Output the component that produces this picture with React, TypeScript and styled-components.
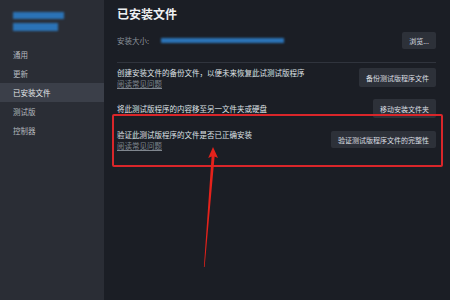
import React from "react";
import styled, { createGlobalStyle } from "styled-components";

const Global = createGlobalStyle`
  html, body { margin: 0; padding: 0; background: #1b1e25; }
  body { font-family: "Noto Sans CJK SC", "Noto Sans", sans-serif; }
  #root { width: 450px; height: 300px; overflow: hidden; }
`;

const Page = styled.div`
  position: relative;
  display: flex;
  width: 450px;
  height: 300px;
  background: #1b1e25;
  overflow: hidden;
`;

const Sidebar = styled.nav`
  width: 104px;
  flex: none;
  background: #2a2d35;
  display: flex;
  flex-direction: column;
  padding-top: 12px;
  box-sizing: border-box;
`;

const Logo = styled.div`
  display: flex;
  flex-direction: column;
  gap: 4px;
  padding-left: 13px;
  margin-bottom: 14px;
`;

const BlurBar = styled.div<{ $w: number; $h: number }>`
  width: ${(p) => p.$w}px;
  height: ${(p) => p.$h}px;
  background: #2b73b6;
  filter: blur(1px);
`;

const NavItem = styled.div<{ $active?: boolean }>`
  height: 19px;
  line-height: 19px;
  padding-left: 13px;
  font-size: 7.5px;
  color: ${(p) => (p.$active ? "#e6e8ea" : "#b5b9bf")};
  background: ${(p) => (p.$active ? "#3b3f49" : "transparent")};
`;

const Main = styled.main`
  flex: 1;
  padding: 6px 14px 0 13px;
  box-sizing: border-box;
  display: flex;
  flex-direction: column;
`;

const Title = styled.h1`
  margin: 0;
  font-size: 12px;
  line-height: 16px;
  font-weight: 700;
  color: #eef0f2;
`;

const SizeRow = styled.div`
  margin-top: 10px;
  height: 17px;
  display: flex;
  align-items: center;
  justify-content: space-between;
`;

const SizeLabel = styled.div`
  display: flex;
  align-items: center;
  gap: 12px;
  font-size: 7.5px;
  color: #8c939b;
`;

const Separator = styled.div`
  margin-top: 13px;
  height: 1px;
  background: #30343d;
`;

const Rows = styled.div`
  display: flex;
  flex-direction: column;
  gap: 10.5px;
  padding-top: 3.5px;
`;

const Row = styled.div`
  display: flex;
  align-items: center;
  justify-content: space-between;
  min-height: 19px;
`;

const TextBlock = styled.div`
  display: flex;
  flex-direction: column;
`;

const Desc = styled.div`
  font-size: 7.5px;
  line-height: 11px;
  color: #dfe2e5;
  white-space: nowrap;
`;

const Link = styled.div`
  font-size: 7.5px;
  line-height: 11px;
  color: #7f868e;
  text-decoration: underline;
  text-underline-offset: 1px;
`;

const Button = styled.div<{ $h?: number }>`
  height: ${(p) => p.$h ?? 19}px;
  padding: 0 7px;
  display: flex;
  align-items: center;
  background: #2d3139;
  border-radius: 2px;
  font-size: 7px;
  color: #dcdfe2;
  white-space: nowrap;
`;

const Highlight = styled.div`
  position: absolute;
  left: 112px;
  top: 114px;
  width: 331px;
  height: 53px;
  border: 2px solid #d9262a;
  border-radius: 2px;
  box-sizing: border-box;
  pointer-events: none;
`;

const Arrow = styled.svg`
  position: absolute;
  left: 0;
  top: 0;
  pointer-events: none;
`;

export default function App() {
  return (
    <>
      <Global />
      <Page>
        <Sidebar>
          <Logo>
            <BlurBar $w={51} $h={7} />
            <BlurBar $w={45} $h={8} />
          </Logo>
          <NavItem>通用</NavItem>
          <NavItem>更新</NavItem>
          <NavItem $active>已安装文件</NavItem>
          <NavItem>测试版</NavItem>
          <NavItem>控制器</NavItem>
        </Sidebar>
        <Main>
          <Title>已安装文件</Title>
          <SizeRow>
            <SizeLabel>
              安装大小:
              <BlurBar $w={123} $h={5} />
            </SizeLabel>
            <Button $h={17}>浏览...</Button>
          </SizeRow>
          <Separator />
          <Rows>
            <Row>
              <TextBlock>
                <Desc>创建安装文件的备份文件，以便未来恢复此试测试版程序</Desc>
                <Link>阅读常见问题</Link>
              </TextBlock>
              <Button>备份测试版程序文件</Button>
            </Row>
            <Row>
              <TextBlock>
                <Desc>将此测试版程序的内容移至另一文件夹或硬盘</Desc>
              </TextBlock>
              <Button>移动安装文件夹</Button>
            </Row>
            <Row>
              <TextBlock>
                <Desc>验证此测试版程序的文件是否已正确安装</Desc>
                <Link>阅读常见问题</Link>
              </TextBlock>
              <Button $h={17}>验证测试版程序文件的完整性</Button>
            </Row>
          </Rows>
        </Main>
        <Highlight />
        <Arrow width={450} height={300} viewBox="0 0 450 300">
          <polygon
            points="213,147 218,158 214.6,156.5 204.6,267 203.9,267 211.6,156.5 208.2,158"
            fill="#e5221b"
          />
        </Arrow>
      </Page>
    </>
  );
}
